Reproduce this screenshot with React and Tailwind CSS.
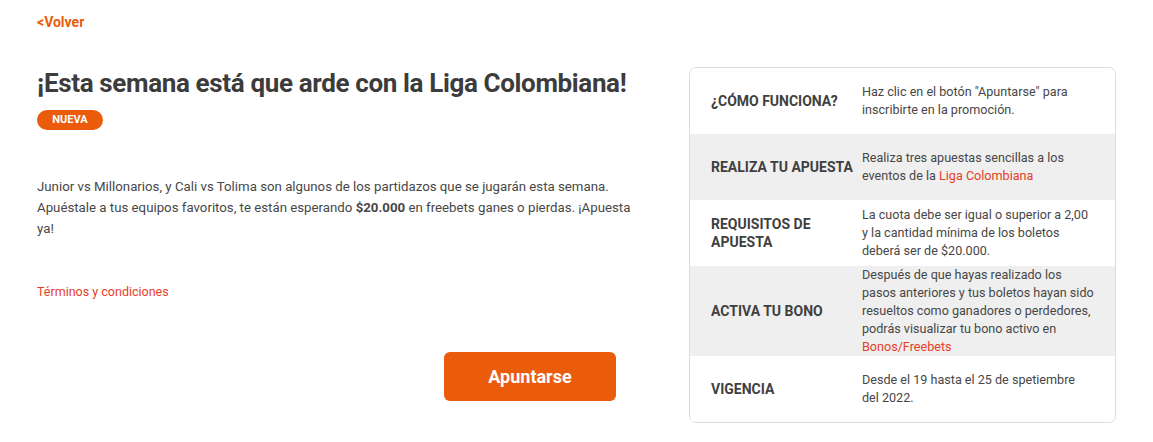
export default function App() {
  const rows = [
    {
      label: "¿CÓMO FUNCIONA?",
      value: <>Haz clic en el botón "Apuntarse" para inscribirte en la promoción.</>,
      gray: false,
    },
    {
      label: "REALIZA TU APUESTA",
      value: (
        <>
          Realiza tres apuestas sencillas a los eventos de la{" "}
          <span className="text-[#e6402a]">Liga Colombiana</span>
        </>
      ),
      gray: true,
    },
    {
      label: "REQUISITOS DE APUESTA",
      value: <>La cuota debe ser igual o superior a 2,00 y la cantidad mínima de los boletos deberá ser de $20.000.</>,
      gray: false,
    },
    {
      label: "ACTIVA TU BONO",
      value: (
        <>
          Después de que hayas realizado los pasos anteriores y tus boletos hayan sido resueltos como ganadores o
          perdedores, podrás visualizar tu bono activo en{" "}
          <span className="text-[#e6402a]">Bonos/Freebets</span>
        </>
      ),
      gray: true,
    },
    {
      label: "VIGENCIA",
      value: <>Desde el 19 hasta el 25 de spetiembre del 2022.</>,
      gray: false,
    },
  ];

  return (
    <div
      className="w-[1153px] h-[442px] bg-white flex justify-between px-[37px] text-[#444444]"
      style={{ fontFamily: "Roboto, 'Liberation Sans', sans-serif" }}
    >
      <div className="w-[580px] flex flex-col items-start">
        <a className="pt-[12px] text-[14px] leading-[20px] font-bold text-[#ea5b0c]">&lt;Volver</a>
        <h1 className="mt-[36px] text-[26px] leading-[30px] font-bold text-[#3c3c3c] whitespace-nowrap tracking-[-0.36px]">
          ¡Esta semana está que arde con la Liga Colombiana!
        </h1>
        <span className="mt-[12px] h-[20px] w-[66px] rounded-full bg-[#ea5b0c] text-white text-[11px] font-bold flex items-center justify-center">
          NUEVA
        </span>
        <p className="mt-[46px] w-[600px] text-[13.25px] leading-[21px] text-[#474747]">
          Junior vs Millonarios, y Cali vs Tolima son algunos de los partidazos que se jugarán esta semana. Apuéstale a
          tus equipos favoritos, te están esperando <b className="font-bold">$20.000</b> en freebets ganes o pierdas.
          ¡Apuesta ya!
        </p>
        <a className="mt-[43px] text-[12.5px] leading-[20px] text-[#e6402a]">Términos y condiciones</a>
        <div className="w-full flex justify-end">
          <button className="mt-[50px] mr-[1px] w-[172px] h-[49px] rounded-[6px] bg-[#ea5b0c] text-white text-[18px] font-bold">
            Apuntarse
          </button>
        </div>
      </div>

      <div className="mt-[67px] w-[427px] self-start border border-[#dcdcdc] rounded-[7px] overflow-hidden">
        {rows.map((r, i) => (
          <div
            key={i}
            className={`flex items-center min-h-[66px] pl-[21px] pr-[21px] ${r.gray ? "bg-[#efefef]" : "bg-white"}`}
          >
            <div className="w-[151px] shrink-0 text-[14px] leading-[18px] font-bold text-[#3f3f3f] pr-[2px]">
              {r.label}
            </div>
            <div className="flex-1 text-[12.6px] leading-[18px] text-[#474747]">{r.value}</div>
          </div>
        ))}
      </div>
    </div>
  );
}
